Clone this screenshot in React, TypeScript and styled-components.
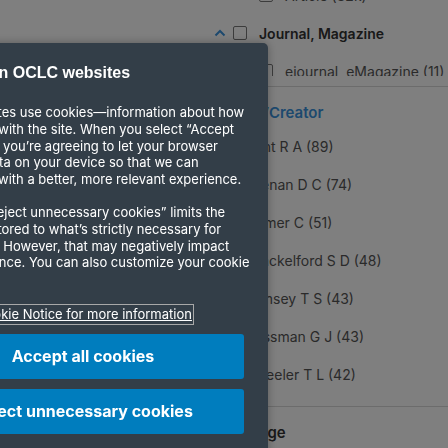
import React from "react";
import styled, { createGlobalStyle } from "styled-components";

const Global = createGlobalStyle`
  html, body { margin: 0; padding: 0; background: #ffffff; overflow: hidden; }
  body {
    font-family: Inter, "Noto Sans", "Liberation Sans", sans-serif;
    width: 448px;
    height: 448px;
  }
`;

const Page = styled.div`
  display: flex;
  flex-direction: column;
  width: 448px;
  height: 472px;
  box-sizing: border-box;
  overflow: hidden;
  padding-left: 214px;
  margin-top: -24px;
  color: #333;
`;

const Scroller = styled.div`
  max-height: 100px;
  overflow: hidden;
`;

const Row = styled.div<{ $indent?: number; $h?: number }>`
  display: flex;
  align-items: center;
  height: ${(p) => p.$h ?? 38}px;
  padding-left: ${(p) => p.$indent ?? 0}px;
`;

const Chevron = styled.svg`
  width: 12px;
  height: 8px;
  margin-right: 7px;
  flex: none;
`;

const Box = styled.span`
  width: 14px;
  height: 14px;
  box-sizing: border-box;
  border: 1.5px solid #787878;
  border-radius: 2px;
  margin-right: 12px;
  flex: none;
`;

const GroupLabel = styled.span`
  font-size: 14px;
  font-weight: 600;
  color: #333;
  white-space: nowrap;
`;

const ItemLabel = styled.span`
  font-size: 14px;
  color: #555;
  white-space: nowrap;
`;

const Divider = styled.hr<{ $top: number }>`
  border: 0;
  border-top: 1px solid #d8d8d8;
  margin: ${(p) => p.$top}px 0 0 0;
  flex: none;
`;

const Heading = styled.div<{ $link?: boolean }>`
  font-size: 15px;
  font-weight: 600;
  line-height: 24px;
  padding-top: 14px;
  margin-bottom: 3px;
  color: ${(p) => (p.$link ? "#3a93dd" : "#333")};
  white-space: nowrap;
`;

const Overlay = styled.div`
  position: fixed;
  inset: 0;
  background: rgba(0, 0, 0, 0.5);
`;

const Dialog = styled.div`
  position: fixed;
  left: -102px;
  top: 43px;
  width: 370px;
  height: 440px;
  box-sizing: border-box;
  padding: 19px 24px;
  background: #333e48;
  border-radius: 0 5px 0 0;
  box-shadow: 0 0 10px rgba(0, 0, 0, 0.3);
  color: #fff;
  display: flex;
  flex-direction: column;
  overflow: hidden;
`;

const Title = styled.h2`
  margin: 0 0 20px 0;
  font-family: "Liberation Sans", Arial, sans-serif;
  font-size: 16px;
  line-height: 22px;
  font-weight: 700;
  white-space: nowrap;
`;

const Para = styled.p<{ $gap: number }>`
  margin: 0 0 ${(p) => p.$gap}px 0;
  font-size: 13px;
  line-height: 16.8px;
  white-space: nowrap;
`;

const NoticeLink = styled.a`
  align-self: flex-start;
  font-size: 13px;
  line-height: 16.8px;
  color: #fff;
  text-decoration: underline;
  outline: 1px solid #a8a8a8;
  outline-offset: 1px;
  white-space: nowrap;
`;

const Buttons = styled.div`
  display: flex;
  flex-direction: column;
  gap: 10px;
  margin-top: 11px;
`;

const Button = styled.button`
  height: 45px;
  border: 0;
  border-radius: 3px;
  background: #007dbe;
  color: #fff;
  font-family: inherit;
  font-size: 16px;
  font-weight: 700;
  cursor: pointer;
`;

const formats = [
  { label: "Article (32k)", sub: true },
  { label: "Journal, Magazine", sub: false },
  { label: "ejournal, eMagazine (11)", sub: true },
];

const creators = [
  "Hunt R A (89)",
  "Keenan D C (74)",
  "Palmer C (51)",
  "Shackelford S D (48)",
  "Ramsey T S (43)",
  "Hussman G J (43)",
  "Wheeler T L (42)",
];

export default function App() {
  return (
    <>
      <Global />
      <Page>
        <Scroller>
          {formats.map((f) =>
            f.sub ? (
              <Row key={f.label} $indent={45}>
                <Box />
                <ItemLabel>{f.label}</ItemLabel>
              </Row>
            ) : (
              <Row key={f.label}>
                <Chevron viewBox="0 0 12 8">
                  <path d="M1.5 6.5 L6 2 L10.5 6.5" fill="none" stroke="#3a93dd" strokeWidth="2" />
                </Chevron>
                <Box />
                <GroupLabel>{f.label}</GroupLabel>
              </Row>
            )
          )}
        </Scroller>
        <Divider $top={10} />
        <Heading $link>Author/Creator</Heading>
        {creators.map((c) => (
          <Row key={c} $h={38.5} $indent={4}>
            <Box />
            <ItemLabel>{c}</ItemLabel>
          </Row>
        ))}
        <Divider $top={13} />
        <Heading>Language</Heading>
      </Page>
      <Overlay />
      <Dialog role="dialog" aria-label="Cookies on OCLC websites">
        <Title>Cookies on OCLC websites</Title>
        <Para $gap={16}>
          OCLC websites use cookies—information about how
          <br />
          you interact with the site. When you select “Accept
          <br />
          All Cookies,” you’re agreeing to let your browser
          <br />
          store that data on your device so that we can
          <br />
          provide you with a better, more relevant experience.
        </Para>
        <Para $gap={18}>
          Selecting “Reject unnecessary cookies” limits the
          <br />
          data being stored to what’s strictly necessary for
          <br />
          it to operate. However, that may negatively impact
          <br />
          your experience. You can also customize your cookie
          <br />
          settings.
        </Para>
        <NoticeLink href="#">Visit our Cookie Notice for more information</NoticeLink>
        <Buttons>
          <Button>Accept all cookies</Button>
          <Button>Reject unnecessary cookies</Button>
        </Buttons>
      </Dialog>
    </>
  );
}
